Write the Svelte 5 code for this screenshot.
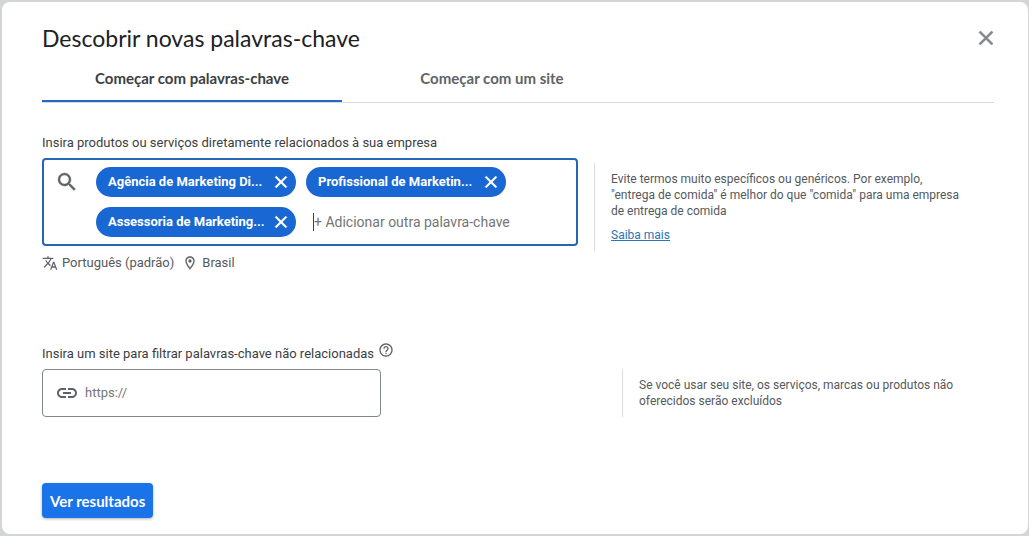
<script lang="ts">
	let tab: string = $state('keywords');
	let keywords: string[] = $state([
		'Agência de Marketing Di...',
		'Profissional de Marketin...',
		'Assessoria de Marketing...'
	]);
	let newKeyword: string = $state('');
	let site: string = $state('');

	const remove = (index: number) => {
		keywords.splice(index, 1);
	};

	const add = (event: KeyboardEvent) => {
		if (event.key !== 'Enter' || !newKeyword.trim()) return;
		event.preventDefault();
		keywords.push(newKeyword.trim());
		newKeyword = '';
	};
</script>

<main>
	<header>
		<h1>Descobrir novas palavras-chave</h1>
		<button class="close" type="button" aria-label="Fechar">
			<svg width="24" height="24" viewBox="0 0 24 24"><path d="M19 6.41 17.59 5 12 10.59 6.41 5 5 6.41 10.59 12 5 17.59 6.41 19 12 13.41 17.59 19 19 17.59 13.41 12z"/></svg>
		</button>
	</header>

	<nav>
		<button type="button" class="tab" class:active={tab === 'keywords'} onclick={() => (tab = 'keywords')}>Começar com palavras-chave</button>
		<button type="button" class="tab" class:active={tab === 'site'} onclick={() => (tab = 'site')}>Começar com um site</button>
	</nav>

	<form onsubmit={(event) => event.preventDefault()}>
		<div class="heading">
			<label for="keyword">Insira produtos ou serviços diretamente relacionados à sua empresa</label>
		</div>
		<div class="row">
			<div class="keywords">
				<div class="keyword-box">
					<svg width="24" height="24" viewBox="0 0 24 24"><path d="M15.5 14h-.79l-.28-.27A6.471 6.471 0 0 0 16 9.5 6.5 6.5 0 1 0 9.5 16c1.61 0 3.09-.59 4.23-1.57l.27.28v.79l5 4.99L20.49 19l-4.99-5zm-6 0C7.01 14 5 11.99 5 9.5S7.01 5 9.5 5 14 7.01 14 9.5 11.99 14 9.5 14z"/></svg>
					<div class="chips">
						{#each keywords as keyword, i}
							<span class="chip">
								<span>{keyword}</span>
								<button type="button" aria-label="Remover {keyword}" onclick={() => remove(i)}>
									<svg width="20" height="20" viewBox="0 0 24 24"><path d="M19 6.41 17.59 5 12 10.59 6.41 5 5 6.41 10.59 12 5 17.59 6.41 19 12 13.41 17.59 19 19 17.59 13.41 12z"/></svg>
								</button>
							</span>
						{/each}
						<div class="new-keyword">
							<input id="keyword" type="text" placeholder="+ Adicionar outra palavra-chave" bind:value={newKeyword} onkeydown={add} />
						</div>
					</div>
				</div>
				<div class="targeting">
					<span>
						<svg width="16" height="16" viewBox="0 0 24 24"><path d="m12.87 15.07-2.54-2.51.03-.03A17.52 17.52 0 0 0 14.07 6H17V4h-7V2H8v2H1v1.99h11.17C11.5 7.92 10.44 9.75 9 11.35 8.07 10.32 7.3 9.19 6.69 8h-2c.73 1.63 1.73 3.17 2.98 4.56l-5.09 5.02L4 19l5-5 3.11 3.11.76-2.04zM18.5 10h-2L12 22h2l1.12-3h4.75L21 22h2l-4.5-12zm-2.62 7 1.62-4.33L19.12 17h-3.24z"/></svg>
						Português (padrão)
					</span>
					<span>
						<svg width="16" height="16" viewBox="0 0 24 24"><path d="M12 2C8.13 2 5 5.13 5 9c0 5.25 7 13 7 13s7-7.75 7-13c0-3.87-3.13-7-7-7zM7 9c0-2.76 2.24-5 5-5s5 2.24 5 5c0 2.88-2.88 7.19-5 9.88C9.92 16.21 7 11.85 7 9z"/><circle cx="12" cy="9" r="2.5"/></svg>
						Brasil
					</span>
				</div>
			</div>
			<aside class="hint keyword-hint">
				<p>Evite termos muito específicos ou genéricos. Por exemplo, "entrega de comida" é melhor do que "comida" para uma empresa de entrega de comida</p>
				<a href="#saiba-mais">Saiba mais</a>
			</aside>
		</div>

		<div class="heading site-heading">
			<label for="site">Insira um site para filtrar palavras-chave não relacionadas</label>
			<button class="help" type="button" aria-label="Ajuda">
				<svg width="16" height="16" viewBox="0 0 24 24"><path d="M11 18h2v-2h-2v2zm1-16C6.48 2 2 6.48 2 12s4.48 10 10 10 10-4.48 10-10S17.52 2 12 2zm0 18c-4.41 0-8-3.59-8-8s3.59-8 8-8 8 3.59 8 8-3.59 8-8 8zm0-14c-2.21 0-4 1.79-4 4h2c0-1.1.9-2 2-2s2 .9 2 2c0 2-3 1.75-3 5h2c0-2.25 3-2.5 3-5 0-2.21-1.79-4-4-4z"/></svg>
			</button>
		</div>
		<div class="row">
			<div class="site">
				<div class="site-box">
					<svg width="24" height="24" viewBox="0 0 24 24"><path d="M3.9 12c0-1.71 1.39-3.1 3.1-3.1h4V7H7c-2.76 0-5 2.24-5 5s2.24 5 5 5h4v-1.9H7c-1.71 0-3.1-1.39-3.1-3.1zM8 13h8v-2H8v2zm9-6h-4v1.9h4c1.71 0 3.1 1.39 3.1 3.1s-1.39 3.1-3.1 3.1h-4V17h4c2.76 0 5-2.24 5-5s-2.24-5-5-5z"/></svg>
					<input id="site" type="text" placeholder="https://" bind:value={site} />
				</div>
			</div>
			<aside class="hint">
				<p>Se você usar seu site, os serviços, marcas ou produtos não oferecidos serão excluídos</p>
			</aside>
		</div>

		<button class="submit" type="submit">Ver resultados</button>
	</form>
</main>

<style>
	:global(body) {
		background: #d4d5d6;
	}

	main {
		box-sizing: border-box;
		min-height: calc(100vh - 4px);
		margin: 2px 1px 2px 2px;
		padding: 20px 34px 16px 40px;
		border-radius: 8px;
		background: #fff;
		color: #3c4043;
		font-family: Roboto, sans-serif;
		font-size: 13px;
		line-height: 20px;
	}

	button, input {
		margin: 0;
		padding: 0;
		border: 0;
		background: none;
		color: inherit;
		font: inherit;
	}

	button { cursor: pointer; }

	svg {
		display: block;
		flex: none;
		fill: #5f6368;
	}

	p { margin: 0; }

	header {
		display: flex;
		align-items: center;
		justify-content: space-between;
		height: 32px;
		margin-bottom: 2px;
	}

	h1 {
		margin: 0;
		color: #202124;
		font-family: 'Google Sans', Lato, sans-serif;
		font-size: 23px;
		font-weight: 400;
		line-height: 32px;
	}

	.close {
		margin-right: -4px;
	}

	.close svg {
		fill: #80868b;
		stroke: #80868b;
		stroke-width: .6;
	}

	nav {
		display: flex;
		border-bottom: 1px solid #dadce0;
	}

	.tab {
		box-sizing: border-box;
		flex: 0 1 300px;
		height: 46px;
		border-bottom: 2px solid transparent;
		color: #5f6368;
		font-family: 'Google Sans', Lato, sans-serif;
		font-size: 15px;
		font-weight: 700;
	}

	.tab.active {
		border-color: #2468c4;
		color: #3c4043;
	}

	.heading {
		display: flex;
		gap: 4px;
		margin: 30px 0 5px;
	}

	.site-heading { margin-top: 71px; }

	.help {
		height: 16px;
		margin-top: -2px;
	}

	.row {
		display: flex;
		align-items: flex-start;
	}

	.keywords {
		flex: 0 1 536px;
		margin-right: 16px;
	}

	.keyword-box {
		display: flex;
		gap: 17px;
		padding: 7px 11px;
		border: 2px solid #2468b4;
		border-radius: 4px;
	}

	.keyword-box > svg {
		margin-top: 3px;
		stroke: #5f6368;
		stroke-width: .4;
	}

	.chips {
		display: flex;
		flex: 1;
		flex-wrap: wrap;
		gap: 10px;
	}

	.chip {
		box-sizing: border-box;
		display: flex;
		align-items: center;
		justify-content: space-between;
		width: 200px;
		height: 30px;
		padding: 0 5px 0 12px;
		border-radius: 15px;
		background: #1967d2;
		color: #fff;
		font-weight: 700;
		white-space: nowrap;
	}

	.chip svg {
		fill: #fff;
		stroke: #fff;
		stroke-width: .8;
	}

	.new-keyword {
		display: flex;
		align-items: center;
		flex: 1;
		height: 30px;
		padding-left: 7px;
	}

	.new-keyword input {
		width: 100%;
		height: 18px;
		border-left: 1px solid #3c4043;
		font-size: 14px;
	}

	input { outline: none; }

	input::placeholder {
		color: #757575;
		opacity: 1;
	}

	.targeting {
		display: flex;
		gap: 8px;
		margin-top: 7px;
		color: #55595d;
	}

	.targeting span {
		display: flex;
		align-items: center;
		gap: 4px;
	}

	.hint {
		flex: 1;
		padding: 8px 28px 8px 16px;
		border-left: 1px solid #dadce0;
		color: #55595d;
		font-size: 12px;
		line-height: 16px;
	}

	.keyword-hint {
		margin-top: 5px;
	}

	.hint a {
		display: inline-block;
		margin-top: 8px;
		color: #2a76b8;
	}

	.site { flex: 0 1 580px; }

	.site-box {
		box-sizing: border-box;
		display: flex;
		align-items: center;
		gap: 6px;
		max-width: 339px;
		height: 48px;
		padding: 0 12px;
		border: 1px solid #80868b;
		border-radius: 4px;
	}

	.site-box input {
		flex: 1;
		min-width: 0;
	}

	.submit {
		height: 35px;
		margin-top: 66px;
		padding: 0 8px;
		border-radius: 4px;
		background: #1a73e8;
		box-shadow: 0 1px 3px rgba(60, 64, 67, .4);
		color: #fff;
		font-family: 'Google Sans', Lato, sans-serif;
		font-size: 15px;
		font-weight: 700;
	}
</style>
